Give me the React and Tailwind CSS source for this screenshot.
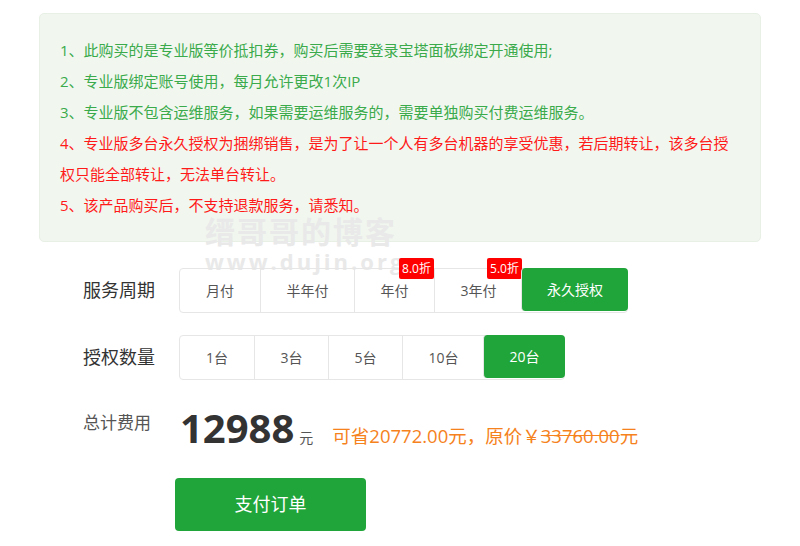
import { useState } from 'react';

const NOTES = [
  { text: '1、此购买的是专业版等价抵扣券，购买后需要登录宝塔面板绑定开通使用;', red: false },
  { text: '2、专业版绑定账号使用，每月允许更改1次IP', red: false },
  { text: '3、专业版不包含运维服务，如果需要运维服务的，需要单独购买付费运维服务。', red: false },
  { text: '4、专业版多台永久授权为捆绑销售，是为了让一个人有多台机器的享受优惠，若后期转让，该多台授权只能全部转让，无法单台转让。', red: true },
  { text: '5、该产品购买后，不支持退款服务，请悉知。', red: true },
];

const PERIODS = [
  { label: '月付', w: 'w-[80px]' },
  { label: '半年付', w: 'w-[94px]' },
  { label: '年付', w: 'w-[80px]', badge: '8.0折' },
  { label: '3年付', w: 'w-[88px]', badge: '5.0折' },
  { label: '永久授权', w: 'w-[107px]' },
];

const COUNTS = [
  { label: '1台', w: 'w-[74px]' },
  { label: '3台', w: 'w-[74px]' },
  { label: '5台', w: 'w-[74px]' },
  { label: '10台', w: 'w-[82px]' },
  { label: '20台', w: 'w-[82px]' },
];

function Options({ items, active, onPick }) {
  return (
    <div className="flex h-[45px] rounded-[4px] border border-[#e6e6e6]">
      {items.map((it, i) => {
        const on = i === active;
        return (
          <button
            key={it.label}
            onClick={() => onPick(i)}
            className={`relative ${it.w} h-full text-[14px] ${i > 0 ? 'border-l border-[#e6e6e6]' : ''} ${
              on ? 'bg-[#20a53a] text-white rounded-[4px] -m-px h-[45px] border-0' : 'text-[#555]'
            }`}
          >
            {it.label}
            {it.badge && (
              <span className="absolute right-0 -top-[11px] bg-[#ff0000] text-white text-[12px] leading-[21px] px-[3px] rounded-[2px]">
                {it.badge}
              </span>
            )}
          </button>
        );
      })}
    </div>
  );
}

export default function App() {
  const [period, setPeriod] = useState(4);
  const [count, setCount] = useState(4);

  return (
    <div className="relative w-[800px] h-[546px] bg-white font-['Open_Sans','Noto_Sans_CJK_SC',sans-serif] overflow-hidden">
      {/* notice */}
      <div className="absolute left-[39px] top-[13px] w-[722px] h-[229px] rounded-[5px] bg-[#f1f7ef] border border-[#e8f0e5] pl-[20px] pr-[22px] pt-[21px]">
        {NOTES.map((n) => (
          <p
            key={n.text}
            className={`text-[15px] leading-[31px] ${n.red ? 'text-[#ff1a1a]' : 'text-[#3aaa4b]'}`}
          >
            {n.text}
          </p>
        ))}
      </div>

      {/* watermark */}
      <div className="absolute left-[205px] top-[216px] text-[#e9e9e9] pointer-events-none select-none">
        <div className="text-[30px] font-bold leading-[32px] tracking-[2px]">缙哥哥的博客</div>
        <div className="text-[22px] font-bold leading-[26px] tracking-[3px]">www.dujin.org</div>
      </div>

      <div className="absolute left-[83px] top-[268px] flex flex-col">
        <div className="flex items-center">
          <span className="w-[96px] text-[18px] text-[#333]">服务周期</span>
          <Options items={PERIODS} active={period} onPick={setPeriod} />
        </div>
        <div className="flex items-center mt-[22px]">
          <span className="w-[96px] text-[18px] text-[#333]">授权数量</span>
          <Options items={COUNTS} active={count} onPick={setCount} />
        </div>
        <div className="flex items-end mt-[24px] h-[48px]">
          <span className="w-[97px] text-[17px] text-[#555] self-start mt-[6px]">总计费用</span>
          <span className="text-[40px] leading-[48px] font-bold text-[#333]">12988</span>
          <span className="ml-[5px] mb-[4px] text-[14px] text-[#555]">元</span>
          <span className="ml-[19px] mb-[2px] text-[18.5px] text-[#f5821c]">
            可省20772.00元，原价￥<span className="line-through">33760.00</span>元
          </span>
        </div>
        <button className="mt-[26px] ml-[92px] w-[191px] h-[53px] rounded-[4px] bg-[#20a53a] text-white text-[18px]">
          支付订单
        </button>
      </div>
    </div>
  );
}
